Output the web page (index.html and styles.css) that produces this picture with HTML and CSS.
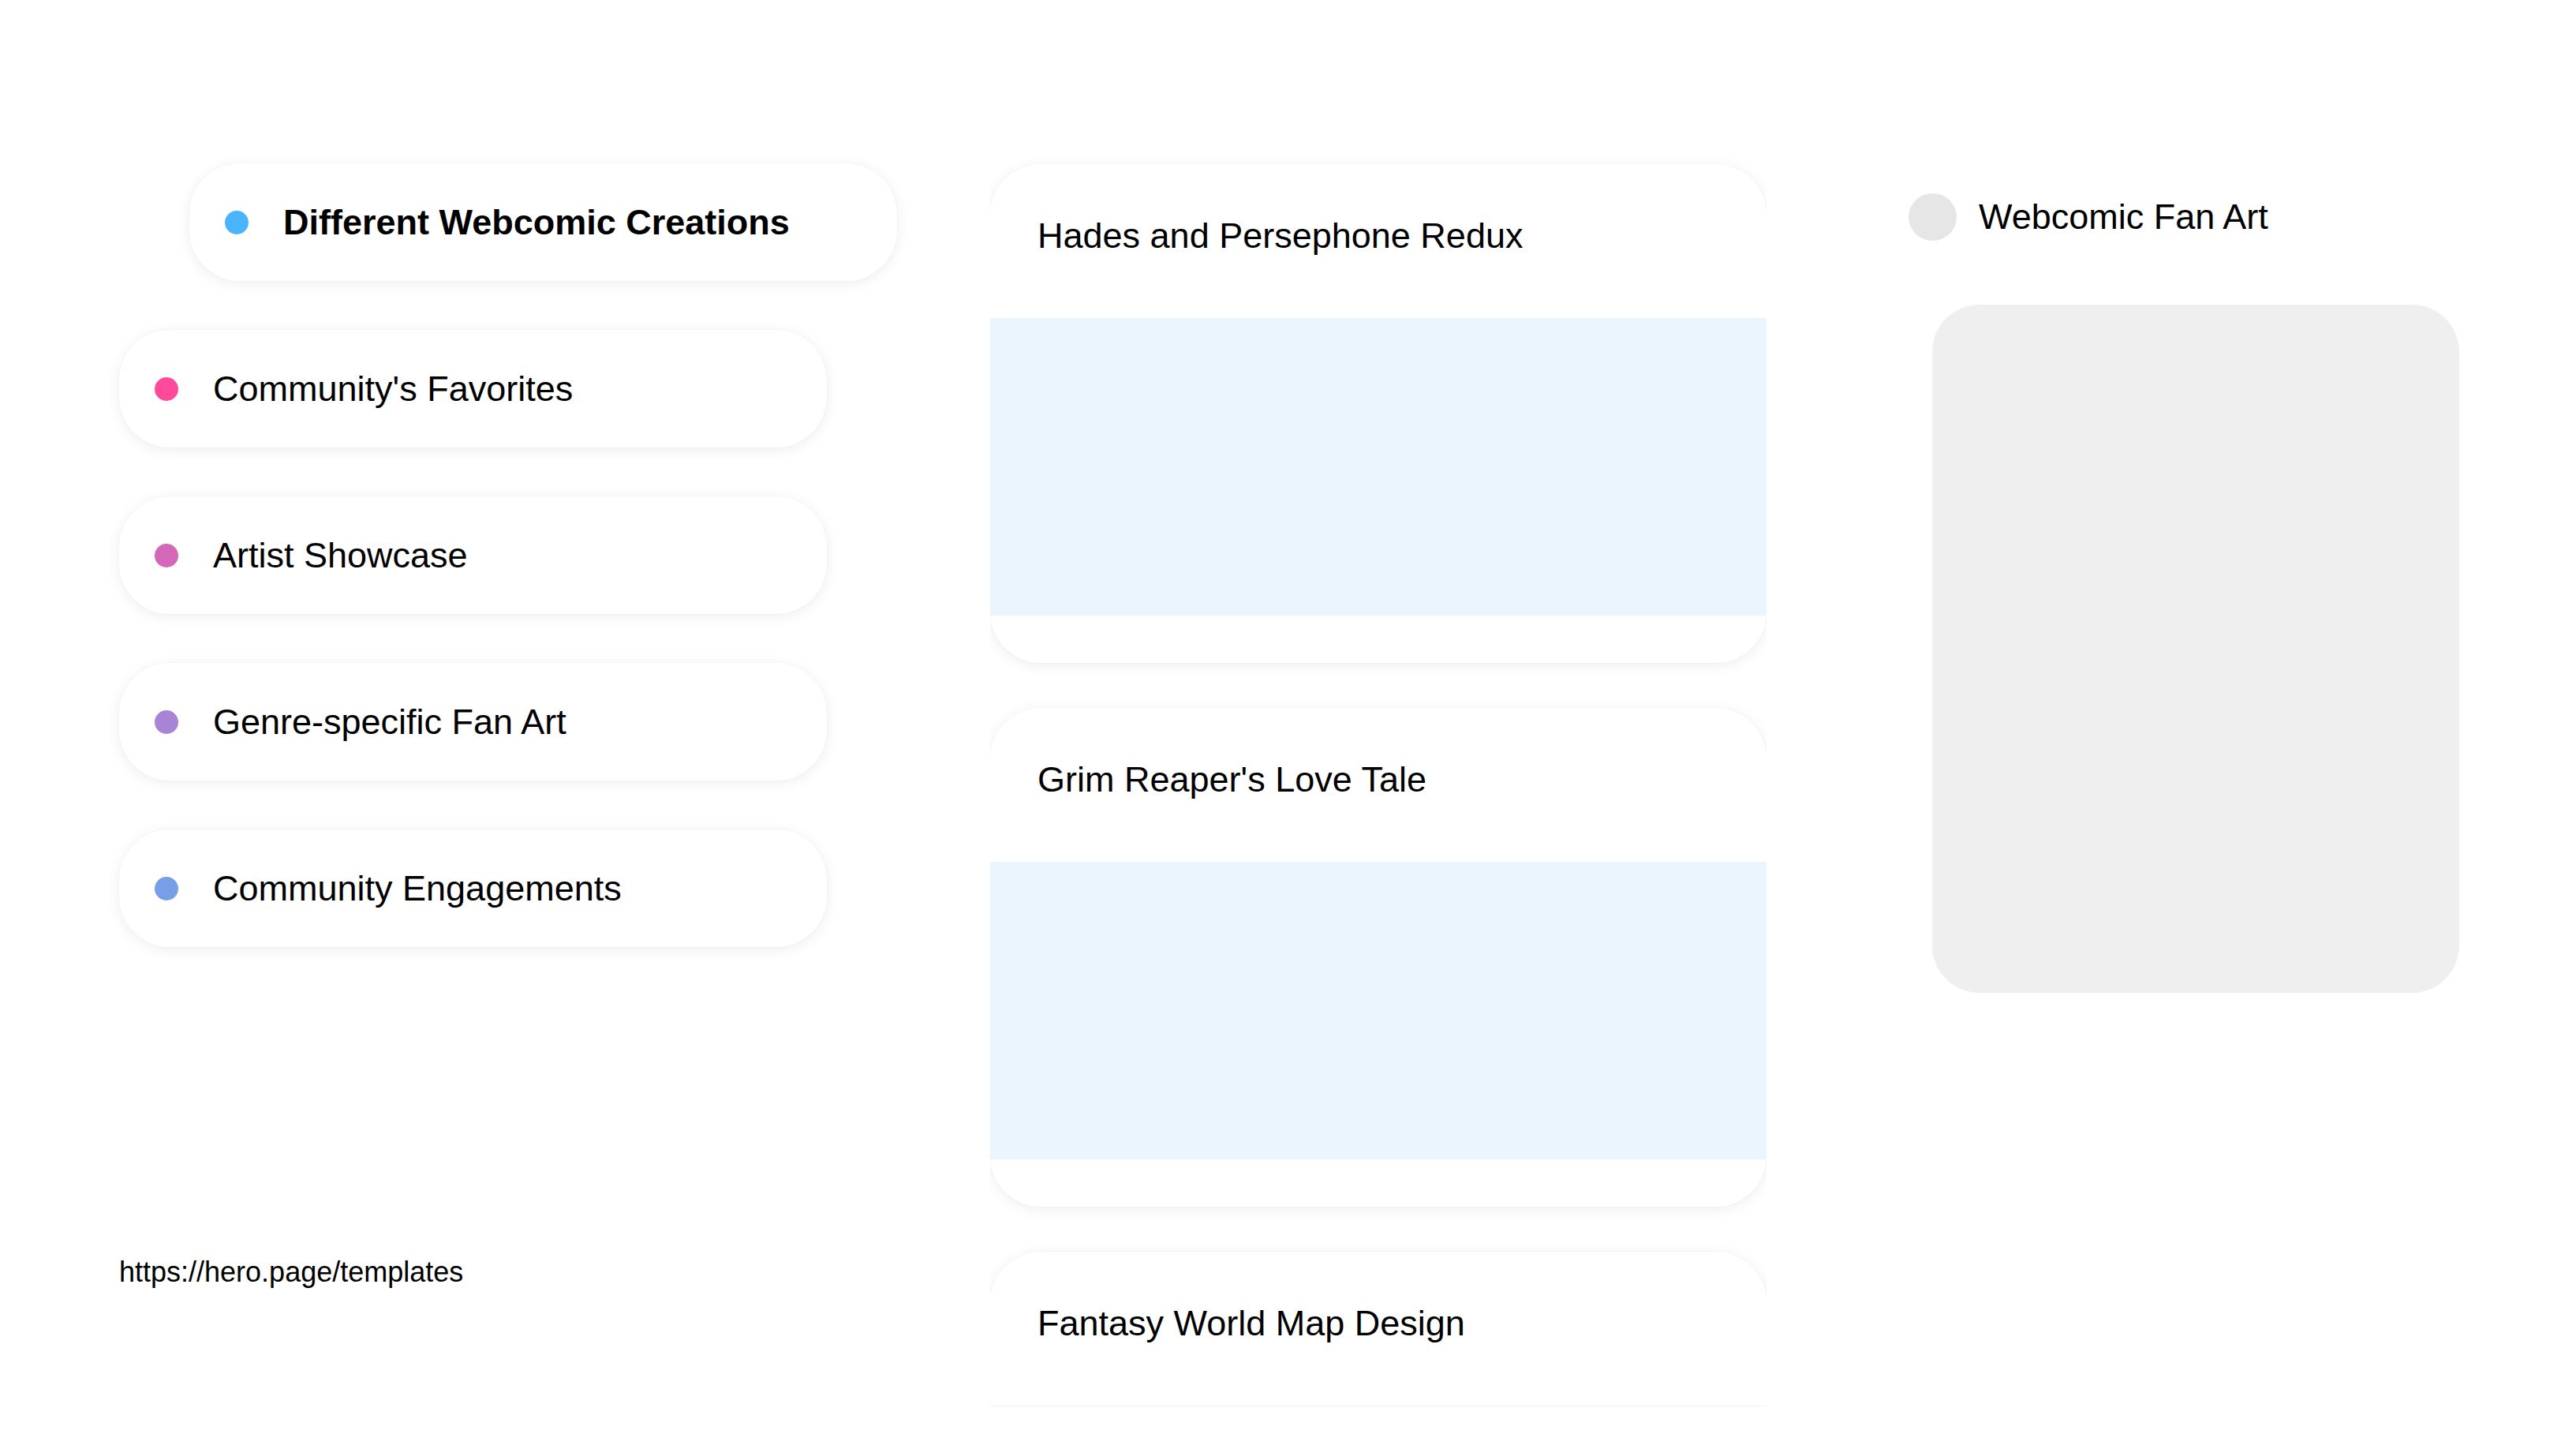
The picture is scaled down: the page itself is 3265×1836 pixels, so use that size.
FILE: index.html
```html
<!DOCTYPE html>
<html lang="en">
<head>
<meta charset="utf-8">
<title>Webcomic Fan Art</title>
<link rel="stylesheet" href="styles.css">
</head>
<body>
<main class="page">
  <section class="col-left">
    <ul class="topics">
      <li class="topic topic-active"><span class="dot dot-blue"></span><span class="topic-label">Different Webcomic Creations</span></li>
      <li class="topic"><span class="dot dot-pink"></span><span class="topic-label">Community's Favorites</span></li>
      <li class="topic"><span class="dot dot-orchid"></span><span class="topic-label">Artist Showcase</span></li>
      <li class="topic"><span class="dot dot-purple"></span><span class="topic-label">Genre-specific Fan Art</span></li>
      <li class="topic"><span class="dot dot-periwinkle"></span><span class="topic-label">Community Engagements</span></li>
    </ul>
    <div class="url">https://hero.page/templates</div>
  </section>

  <section class="col-mid">
    <article class="card">
      <h2 class="card-title">Hades and Persephone Redux</h2>
      <div class="card-image"></div>
    </article>
    <article class="card">
      <h2 class="card-title">Grim Reaper's Love Tale</h2>
      <div class="card-image"></div>
    </article>
    <article class="card">
      <h2 class="card-title">Fantasy World Map Design</h2>
      <div class="card-image"></div>
    </article>
  </section>

  <section class="col-right">
    <div class="profile">
      <span class="avatar"></span>
      <span class="profile-name">Webcomic Fan Art</span>
    </div>
    <div class="preview"></div>
  </section>
</main>
</body>
</html>
```

FILE: styles.css
```css
* {
  box-sizing: border-box;
}

html, body {
  margin: 0;
  padding: 0;
  background: #ffffff;
}

body {
  font-family: "Liberation Sans", Arial, sans-serif;
  color: #000000;
  width: 3265px;
  height: 1836px;
  overflow: hidden;
}

.page {
  display: flex;
  align-items: flex-start;
  padding: 150px 0 0 151px;
}

/* Left column */
.col-left {
  width: 987px;
  padding-top: 57px;
  flex: none;
}

.topics {
  list-style: none;
  margin: 0;
  padding: 0;
  display: flex;
  flex-direction: column;
  gap: 62px;
}

.topic {
  width: 897px;
  height: 149px;
  display: flex;
  align-items: center;
  gap: 44px;
  padding: 0 45px;
  background: #ffffff;
  border-radius: 64px;
  box-shadow: 0 3px 18px rgba(0, 0, 0, 0.07), 0 0 0 1px rgba(0, 0, 0, 0.015);
  font-size: 45px;
}

.topic-active {
  margin-left: 89px;
  font-weight: 700;
}

.dot {
  width: 30px;
  height: 30px;
  border-radius: 50%;
  flex: none;
}

.dot-blue { background: #4ab4ff; }
.dot-pink { background: #ff4a9b; }
.dot-orchid { background: #d467b8; }
.dot-purple { background: #a884d4; }
.dot-periwinkle { background: #789ee8; }

.url {
  margin-top: 391px;
  font-size: 36px;
}

/* Middle column */
.col-mid {
  width: 984px;
  margin-left: 117px;
  height: 1632px;
  overflow: hidden;
  padding-top: 58px;
  flex: none;
  display: flex;
  flex-direction: column;
  gap: 57px;
}

.card {
  flex: none;
  height: 632px;
  background: #ffffff;
  border-radius: 64px;
  box-shadow: 0 3px 18px rgba(0, 0, 0, 0.07), 0 0 0 1px rgba(0, 0, 0, 0.015);
  padding-bottom: 60px;
  overflow: hidden;
  display: flex;
  flex-direction: column;
}

.card-title {
  margin: 0;
  height: 195px;
  padding: 65px 60px 0;
  font-size: 45px;
  font-weight: 400;
}

.card-image {
  height: 377px;
  background: #ebf5fe;
}

/* Right column */
.col-right {
  margin-left: 180px;
  padding-top: 95px;
  flex: none;
}

.profile {
  display: flex;
  align-items: center;
  gap: 28px;
  height: 60px;
}

.avatar {
  width: 61px;
  height: 60px;
  border-radius: 50%;
  background: #e6e6e6;
  flex: none;
}

.profile-name {
  font-size: 45px;
}

.preview {
  margin: 81px 0 0 30px;
  width: 668px;
  height: 872px;
  border-radius: 60px;
  background: #efefef;
}
```
